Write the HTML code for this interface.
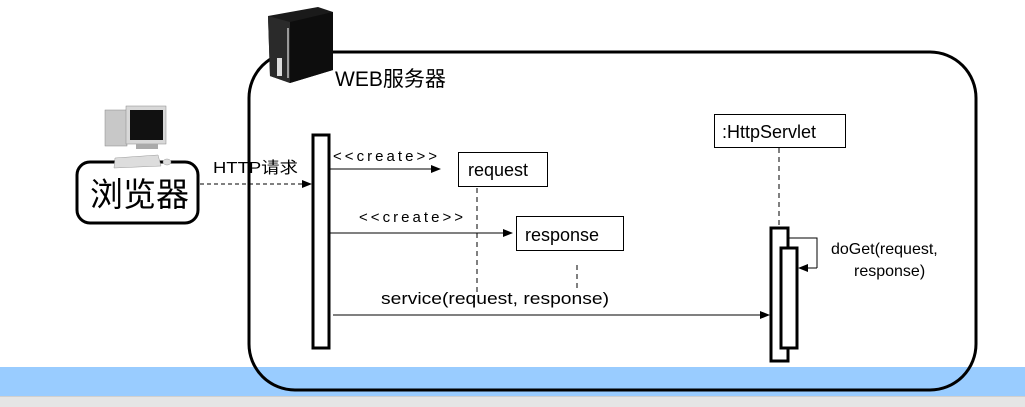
<!DOCTYPE html>
<html><head><meta charset="utf-8"><style>
html,body{margin:0;padding:0;width:1025px;height:407px;overflow:hidden;background:#fff}
svg{display:block}
text{font-family:"Liberation Sans","Noto Sans CJK SC",sans-serif;fill:#000}
</style></head><body>
<svg width="1025" height="407" viewBox="0 0 1025 407" xmlns="http://www.w3.org/2000/svg">
<defs><marker id="a" markerWidth="10" markerHeight="8" refX="9" refY="4" orient="auto" markerUnits="userSpaceOnUse"><path d="M0,0 L10,4 L0,8 Z" fill="#000"/></marker></defs>
<rect x="0" y="367" width="1025" height="30" fill="#99ccff"/>
<rect x="0" y="397" width="1025" height="10" fill="#e5e5e5"/>
<rect x="0" y="396" width="1025" height="1" fill="#d0d0d0"/>
<rect x="249" y="52" width="727" height="338" rx="46" ry="46" fill="none" stroke="#000" stroke-width="3"/>
<g>
<polygon points="268,16 318,7 333,12 333,70 290,83 270,76" fill="#1a1a1a"/>
<polygon points="290,22 333,12 333,70 290,83" fill="#0d0d0d"/>
<polygon points="268,16 290,22 290,83 270,76" fill="#2a2a2a"/>
<rect x="277" y="58" width="5" height="18" fill="#ddd"/>
<rect x="287" y="28" width="2" height="50" fill="#999"/>
</g>
<text x="335" y="86" font-size="21">WEB服务器</text>
<rect x="77" y="162" width="121" height="61" rx="13" fill="#fff" stroke="#000" stroke-width="3"/>
<g>
<rect x="105" y="110" width="22" height="36" fill="#c8c8c8" stroke="#888" stroke-width="0.5"/>
<rect x="126" y="106" width="40" height="38" fill="#d8d8d8" stroke="#888" stroke-width="0.5"/>
<rect x="130" y="110" width="33" height="30" fill="#111"/>
<rect x="136" y="144" width="22" height="5" fill="#aaa"/>
<polygon points="115,158 158,155 161,166 114,168" fill="#ddd" stroke="#999" stroke-width="0.5"/>
<ellipse cx="167" cy="162" rx="4" ry="3" fill="#ddd" stroke="#999" stroke-width="0.5"/>
</g>
<text x="90" y="206" font-size="33">浏览器</text>
<text x="213" y="173" font-size="16" textLength="85" lengthAdjust="spacingAndGlyphs">HTTP请求</text>
<line x1="200" y1="184" x2="311" y2="184" stroke="#000" stroke-width="1" stroke-dasharray="4,3" marker-end="url(#a)"/>
<rect x="313" y="135" width="16" height="213" fill="#fff" stroke="#000" stroke-width="3"/>
<text x="333" y="161" font-size="15" textLength="104">&lt;&lt;create&gt;&gt;</text>
<line x1="330" y1="169" x2="440" y2="169" stroke="#000" marker-end="url(#a)"/>
<rect x="458.5" y="152.5" width="89" height="34" fill="#fff" stroke="#000"/>
<text x="468" y="176" font-size="18">request</text>
<line x1="477" y1="188" x2="477" y2="292" stroke="#000" stroke-dasharray="5,4"/>
<text x="359" y="222" font-size="15" textLength="104">&lt;&lt;create&gt;&gt;</text>
<line x1="330" y1="233" x2="512" y2="233" stroke="#000" marker-end="url(#a)"/>
<rect x="516.5" y="216.5" width="107" height="34" fill="#fff" stroke="#000"/>
<text x="525" y="241" font-size="18">response</text>
<line x1="577" y1="265" x2="577" y2="292" stroke="#000" stroke-dasharray="5,4"/>
<text x="381" y="304" font-size="17" textLength="228" lengthAdjust="spacingAndGlyphs">service(request, response)</text>
<line x1="333" y1="315" x2="769" y2="315" stroke="#000" marker-end="url(#a)"/>
<rect x="714.5" y="114.5" width="131" height="33" fill="#fff" stroke="#000"/>
<text x="722" y="138" font-size="18">:HttpServlet</text>
<line x1="779" y1="148" x2="779" y2="227" stroke="#000" stroke-dasharray="5,4"/>
<rect x="771" y="228" width="17" height="133" fill="#fff" stroke="#000" stroke-width="3"/>
<polyline points="789,238 817,238 817,268" fill="none" stroke="#000"/>
<line x1="817" y1="268" x2="799" y2="268" stroke="#000" marker-end="url(#a)"/>
<rect x="781" y="248" width="16" height="100" fill="#fff" stroke="#000" stroke-width="3"/>
<text x="831" y="254" font-size="16">doGet(request,</text>
<text x="854" y="276" font-size="16">response)</text>
</svg>
</body></html>
